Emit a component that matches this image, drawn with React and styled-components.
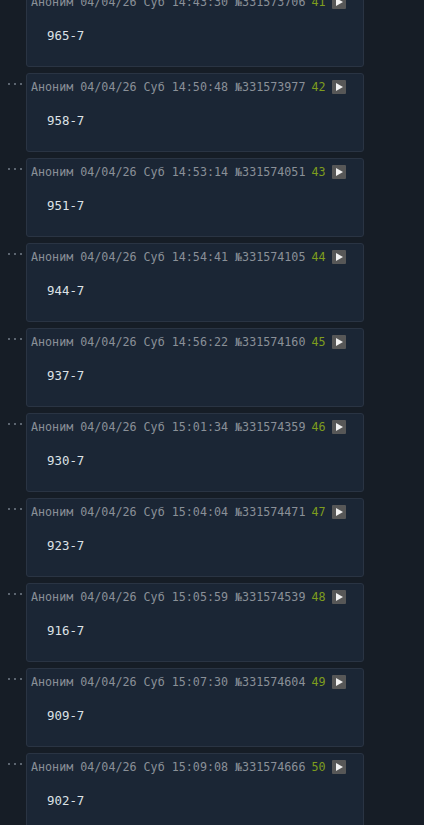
import React from "react";
import styled, { createGlobalStyle } from "styled-components";

const Global = createGlobalStyle`
  html, body { margin: 0; padding: 0; background: #161d26; }
  body { font-family: "DejaVu Sans Mono", "Liberation Mono", monospace; }
`;

const Thread = styled.div`
  display: flex;
  flex-direction: column;
  gap: 6px;
  margin-top: -12px;
  padding-bottom: 20px;
`;

const Row = styled.div`
  display: flex;
  align-items: flex-start;
`;

const Dots = styled.div`
  width: 26px;
  flex: 0 0 26px;
  display: flex;
  gap: 4px;
  padding: 10px 0 0 8px;
  box-sizing: border-box;
`;

const Dot = styled.span`
  width: 2px;
  height: 2px;
  background: #5c6570;
`;

const Post = styled.div`
  width: 338px;
  box-sizing: border-box;
  height: 79px;
  background: #1b2635;
  border: 1px solid #2a3443;
  border-radius: 3px;
  padding: 5px 4px 0 4px;
`;

const Header = styled.div`
  display: flex;
  align-items: center;
  height: 16px;
  font-size: 11.7px;
  line-height: 16px;
  color: #8a9098;
  white-space: nowrap;
`;

const Num = styled.span`
  color: #7e9d1e;
  margin-left: 6px;
`;

const PlayBtn = styled.span`
  display: inline-flex;
  align-items: center;
  justify-content: center;
  width: 14px;
  height: 14px;
  margin-left: 6px;
  background: #575757;
  border-radius: 1px;
`;

const Message = styled.div`
  margin: 17px 0 0 16px;
  font-size: 12.4px;
  line-height: 18px;
  color: #dde2e6;
`;

const posts = [
  ["14:43:30", "331573706", 41, "965-7"],
  ["14:50:48", "331573977", 42, "958-7"],
  ["14:53:14", "331574051", 43, "951-7"],
  ["14:54:41", "331574105", 44, "944-7"],
  ["14:56:22", "331574160", 45, "937-7"],
  ["15:01:34", "331574359", 46, "930-7"],
  ["15:04:04", "331574471", 47, "923-7"],
  ["15:05:59", "331574539", 48, "916-7"],
  ["15:07:30", "331574604", 49, "909-7"],
  ["15:09:08", "331574666", 50, "902-7"],
];

const Play = () => (
  <svg width="10" height="10" viewBox="0 0 10 10">
    <path d="M2 1 L9 5 L2 9 Z" fill="#f2f2f2" />
  </svg>
);

export default function App() {
  return (
    <>
      <Global />
      <Thread>
        {posts.map(([time, id, n, msg]) => (
          <Row key={id}>
            <Dots>
              <Dot />
              <Dot />
              <Dot />
            </Dots>
            <Post>
              <Header>
                <span>Аноним 04/04/26 Суб {time} №{id}</span>
                <Num>{n}</Num>
                <PlayBtn>
                  <Play />
                </PlayBtn>
              </Header>
              <Message>{msg}</Message>
            </Post>
          </Row>
        ))}
      </Thread>
    </>
  );
}
